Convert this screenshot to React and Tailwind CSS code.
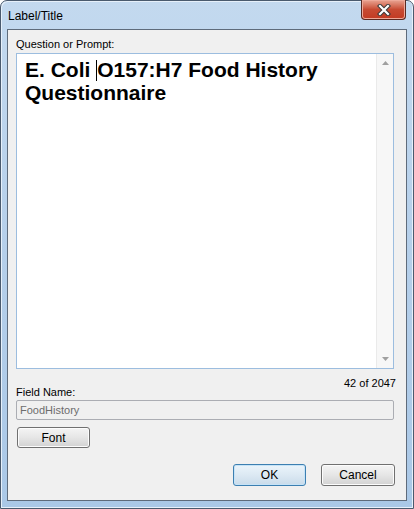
import React from "react";

const CloseGlyph = () => (
    <svg width="14" height="12" viewBox="0 0 14 12">
        <path d="M3 2 L11 10 M11 2 L3 10" stroke="#3a3a3a" strokeWidth="4.2" strokeLinecap="square" />
        <path d="M3 2 L11 10 M11 2 L3 10" stroke="#ffffff" strokeWidth="2.2" strokeLinecap="square" />
    </svg>
);

const Arrow = ({ up }) => (
    <svg width="7" height="4" viewBox="0 0 7 4">
        <path d={up ? "M0 4 L3.5 0 L7 4 Z" : "M0 0 L3.5 4 L7 0 Z"} fill="#a0a0a0" />
    </svg>
);

const WinButton = ({ children, primary, className }) => (
    <button
        className={`rounded-[3px] border text-[12px] text-black leading-none ${
            primary
                ? "border-[#3c7fb1] bg-gradient-to-b from-[#ebf4fb] via-[#dce9f3] to-[#c9dbea] shadow-[inset_0_0_0_1px_#c6e3f7]"
                : "border-[#707070] bg-gradient-to-b from-[#f4f4f4] via-[#e6e6e6] to-[#d2d2d2] shadow-[inset_0_0_0_1px_#fcfcfc]"
        } ${className}`}
    >
        {children}
    </button>
);

export default function App() {
    return (
        <div className="w-[414px] h-[509px] font-['Liberation_Sans',Arial,sans-serif] bg-white">
            <div className="w-[414px] h-[509px] flex flex-col border border-[#4a5a6e] rounded-t-[7px] bg-gradient-to-b from-[#c3d9ef] via-[#b5cfea] to-[#aac8e7] shadow-[inset_1px_1px_0_#e6f0fa,inset_-1px_-1px_0_#e6f0fa] px-[6px] pb-[7px]">
                {/* title bar */}
                <div className="h-[28px] flex justify-between">
                    <div className="pl-[1px] pt-[8px] text-[12px] leading-[14px] text-black">Label/Title</div>
                    <div className="-mt-px mr-px w-[45px] h-[20px] rounded-b-[4px] border border-[#5a2a22] border-t-0 bg-gradient-to-b from-[#e8a493] via-[#c74a32] to-[#c23a22] shadow-[inset_0_0_0_1px_#eea999] flex items-center justify-center">
                        <CloseGlyph />
                    </div>
                </div>

                {/* client area */}
                <div className="flex-1 border border-[#5e6b7b] bg-[#f0f0f0] flex flex-col px-[8px] text-[11px] text-black">
                    <div className="pt-[8px] leading-[13px]">Question or Prompt:</div>

                    <div className="mt-[2px] h-[316px] w-[378px] border border-[#9cbddf] bg-white flex">
                        <div className="flex-1 pl-[8px] pt-[4px] text-[21px] leading-[23px] font-bold text-black">
                            E. Coli <i className="inline-block w-px h-[21px] bg-black align-[-4px]"></i>O157:H7 Food History Questionnaire
                        </div>
                        <div className="w-[17px] bg-[#f7f7f7] border-l border-[#eaeaea] flex flex-col justify-between items-center py-[7px]">
                            <Arrow up />
                            <Arrow />
                        </div>
                    </div>

                    <div className="h-[31px] flex justify-between">
                        <div className="self-end leading-[13px] pb-px">Field Name:</div>
                        <div className="pt-[8px] pr-[2px] leading-[13px]">42 of 2047</div>
                    </div>

                    <div className="h-[20px] w-[378px] border border-[#abadb3] rounded-[2px] bg-[#f0f0f0] px-[3px] flex items-center text-[#6d6d6d] leading-[13px]">
                        FoodHistory
                    </div>

                    <WinButton className="mt-[7px] ml-px w-[73px] h-[21px]">Font</WinButton>

                    <div className="mt-[16px] flex justify-end gap-[15px] pr-[3px]">
                        <WinButton primary className="w-[73px] h-[22px]">OK</WinButton>
                        <WinButton className="w-[74px] h-[22px]">Cancel</WinButton>
                    </div>
                </div>
            </div>
        </div>
    );
}
